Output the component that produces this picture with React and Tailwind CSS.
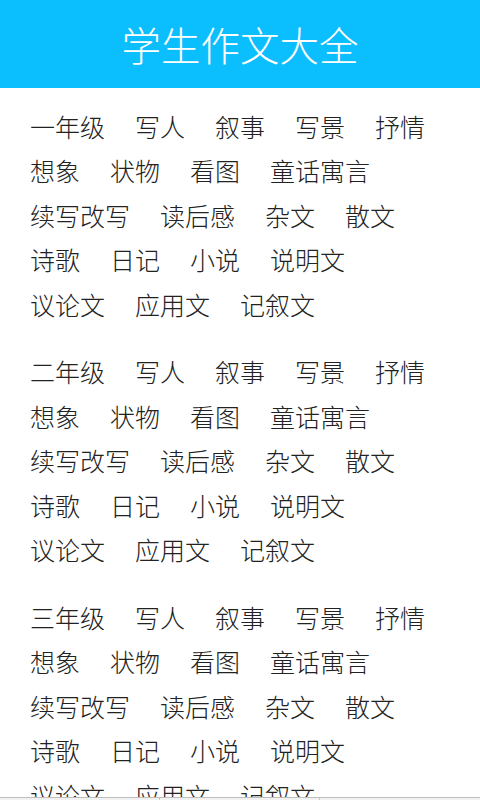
const grades = ["一年级", "二年级", "三年级"];

// each grade gets the same set of essay categories, laid out in fixed rows
const rows = (grade) => [
  [grade, "写人", "叙事", "写景", "抒情"],
  ["想象", "状物", "看图", "童话寓言"],
  ["续写改写", "读后感", "杂文", "散文"],
  ["诗歌", "日记", "小说", "说明文"],
  ["议论文", "应用文", "记叙文"],
];

function Section({ grade }) {
  return (
    <div className="flex flex-col">
      {rows(grade).map((row, i) => (
        <div key={i} className="flex gap-x-[30px] h-[44.5px] items-center">
          {row.map((t) => (
            <span key={t} className="text-[25px] leading-none font-light text-[#222]">
              {t}
            </span>
          ))}
        </div>
      ))}
    </div>
  );
}

export default function App() {
  return (
    <div
      className="min-h-screen bg-white"
      style={{ fontFamily: '"Noto Sans CJK SC", "Noto Sans", sans-serif' }}
    >
      <div className="h-[88px] bg-[#0bbefd] flex items-center justify-center">
        <h1 className="text-[39.5px] leading-none text-white font-light">学生作文大全</h1>
      </div>

      <div className="pl-[30px] pt-[16px] pb-16 flex flex-col gap-[23px]">
        {grades.map((g) => (
          <Section key={g} grade={g} />
        ))}
      </div>

      {/* bottom tab bar, mostly below the fold */}
      <div className="fixed left-0 right-0 bottom-0 h-[3px] bg-[#f2f2f2] border-t border-[#bdbdbd] grid grid-cols-3">
        <div className="border-r border-[#c8c8c8]" />
        <div className="border-r border-[#c8c8c8]" />
        <div />
      </div>
    </div>
  );
}
